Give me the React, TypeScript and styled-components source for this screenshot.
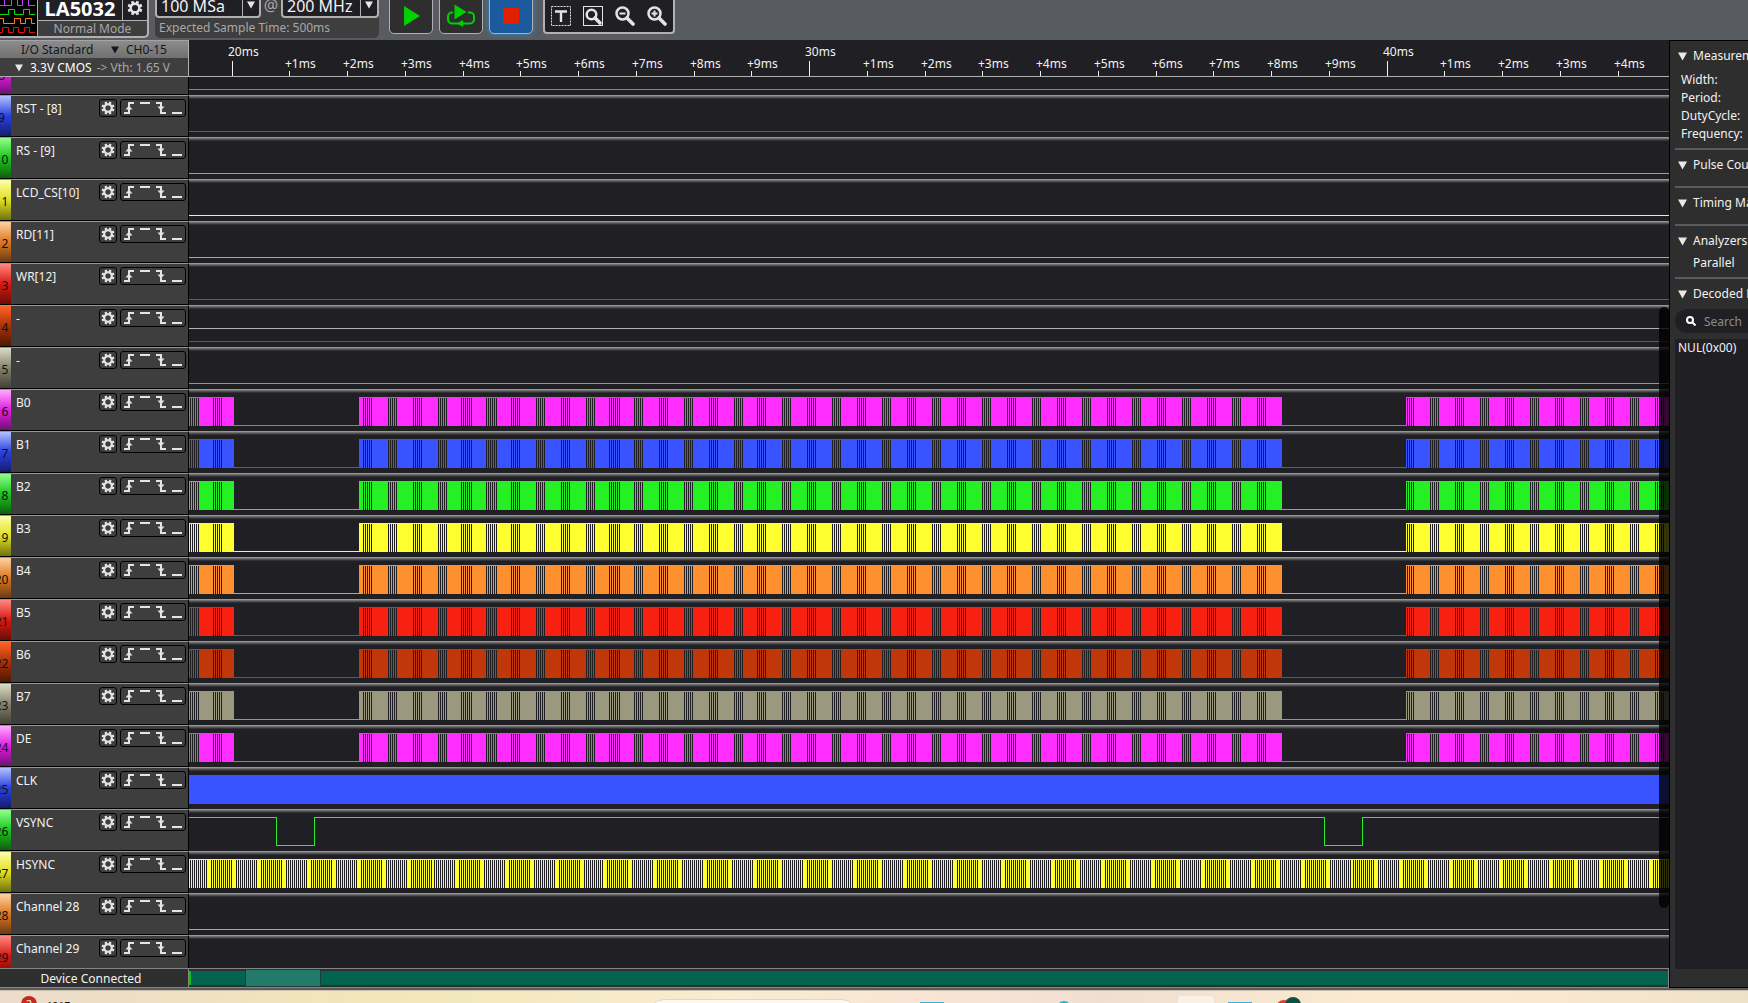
import React from "react";
import styled, { createGlobalStyle } from "styled-components";

const color = {
  chrome: "#585b5f",
  panel: "#3e3e3e",
  dark: "#2e2e2e",
  canvas: "#201f24",
  edge: "#b0b0b0",
  muted: "#a8a8a8",
  text: "#f2f2f2",
};

const GlobalStyle = createGlobalStyle`
  * { box-sizing: border-box; }
  body { margin: 0; background: ${color.chrome}; }
  body, button, input, select {
    font-family: "Noto Sans", "Open Sans", sans-serif;
    font-size: 12px;
    line-height: 18px;
    color: ${color.text};
  }
  button { padding: 0; cursor: pointer; }
`;

const Shell = styled.div`
  display: flex;
  flex-direction: column;
  height: 100vh;
  overflow: hidden;
  background: ${color.chrome};
`;

/* ---------- toolbar ---------- */

const Toolbar = styled.header`
  display: flex;
  align-items: flex-end;
  height: 40px;
  flex: none;
  overflow: hidden;
`;

const DeviceCard = styled.section`
  display: flex;
  height: 48px;
  width: 149px;
  margin-bottom: 2px;
  border: solid ${color.edge};
  border-width: 0 2px 2px 0;
  border-radius: 0 0 5px 0;
  background: ${color.panel};
  overflow: hidden;
`;

const LogoBox = styled.div`
  width: 38px;
  flex: none;
  background: #000;
  border-right: 1px solid ${color.edge};
`;

const DeviceInfo = styled.div`
  flex: 1;
  display: flex;
  flex-direction: column;
`;

const DeviceTop = styled.div`
  flex: 1;
  display: flex;
  align-items: flex-end;
  background: ${color.canvas};
  border-bottom: 1px solid ${color.edge};
`;

const DeviceName = styled.h1`
  flex: 1;
  margin: 0;
  text-align: center;
  font-size: 20px;
  line-height: 22px;
  font-weight: 700;
  color: #fff;
`;

const DeviceGear = styled.button`
  display: grid;
  place-items: center;
  width: 25px;
  height: 24px;
  border: 0;
  border-left: 1px solid ${color.edge};
  background: none;
`;

const DeviceMode = styled.div`
  height: 15px;
  line-height: 15px;
  text-align: center;
  color: ${color.muted};
`;

const SampleCard = styled.section`
  display: flex;
  flex-direction: column;
  justify-content: flex-end;
  width: 224px;
  height: 48px;
  margin: 0 10px 2px 6px;
  border-radius: 0 0 5px 5px;
  background: ${color.panel};
`;

const SampleRow = styled.div`
  display: flex;
  justify-content: space-between;
  align-items: center;
`;

const At = styled.span`
  font-size: 16px;
  color: ${color.muted};
`;

const Picker = styled.label<{ $width: number }>`
  display: flex;
  align-items: center;
  width: ${(p) => p.$width}px;
  height: 26px;
  border: 2px solid ${color.edge};
  border-radius: 4px;
  background: ${color.canvas};
`;

const PickerSelect = styled.select`
  flex: 1;
  min-width: 0;
  height: 22px;
  padding: 2px 0 0 4px;
  border: 0;
  appearance: none;
  background: none;
  font-size: 16px;
  line-height: 20px;
`;

const PickerArrow = styled.span`
  display: grid;
  place-items: center;
  width: 17px;
  height: 22px;
  border-left: 1px solid ${color.edge};
`;

const SampleNote = styled.div`
  height: 20px;
  padding: 0 4px;
  line-height: 20px;
  color: ${color.muted};
`;

const RunButtons = styled.div`
  display: flex;
  gap: 6px;
  margin: 0 10px 6px 0;
`;

const RunButton = styled.button<{ $active?: boolean }>`
  display: grid;
  place-items: center;
  width: 44px;
  height: 44px;
  padding-top: 8px;
  border: 1px solid ${color.edge};
  border-radius: 5px;
  background: ${(p) => (p.$active ? "#1c5a9f" : color.dark)};
  box-shadow: ${(p) => (p.$active ? "0 0 6px #2f86c8" : "none")};
`;

const ToolGroup = styled.div`
  display: flex;
  align-items: flex-end;
  gap: 12px;
  height: 44px;
  margin-bottom: 6px;
  padding: 0 6px 6px;
  border: 2px solid ${color.edge};
  border-radius: 4px;
  background: ${color.canvas};
`;

const ToolButton = styled.button`
  width: 20px;
  height: 20px;
  border: 0;
  background: none;
  svg { display: block; }
`;

/* ---------- workspace ---------- */

const Workspace = styled.div`
  display: flex;
  flex: 1;
  min-height: 0;
  margin-bottom: 2px;
`;

const Capture = styled.main`
  display: flex;
  flex-direction: column;
  flex: 1;
  min-width: 0;
  background: ${color.canvas};
`;

const CaptureHead = styled.div`
  display: flex;
  height: 37px;
  flex: none;
  border-bottom: 1px solid ${color.edge};
`;

const IoStandard = styled.div`
  width: 189px;
  flex: none;
  border-right: 1px solid ${color.edge};
  background: ${color.panel};
`;

const IoLine = styled.div<{ $bright?: boolean }>`
  display: flex;
  align-items: center;
  height: 18px;
  padding-top: 1px;
  line-height: 16px;
  gap: 7px;
  padding-left: ${(p) => (p.$bright ? 21 : 15)}px;
  color: ${(p) => (p.$bright ? "#161616" : "#fff")};
  background: ${(p) => (p.$bright ? "linear-gradient(#8c8c8c, #707070)" : "none")};
  border-top: ${(p) => (p.$bright ? "1px solid #a4a4a4" : "0")};
`;

const IoName = styled.span`
  width: 83px;
`;

const Threshold = styled.span`
  color: ${color.muted};
  margin-left: -2px;
  white-space: pre;
`;

const Ruler = styled.svg`
  flex: 1;
  min-width: 0;
  height: 36px;
  fill: ${color.text};
`;

const Channels = styled.div`
  position: relative;
  flex: 1;
  min-height: 0;
  overflow: hidden;
`;

const ChannelList = styled.ul`
  list-style: none;
  margin: -24px 0 0;
  padding: 0;
`;

const ChannelRow = styled.li`
  display: flex;
  height: 42px;
`;

const ChannelHead = styled.div`
  display: flex;
  align-items: flex-start;
  width: 189px;
  flex: none;
  border-top: 1px solid #969696;
  border-right: 1px solid #000;
  border-bottom: 1px solid #000;
  background: ${color.panel};
`;

const ChannelTab = styled.span<{ $light: string; $mid: string; $deep: string }>`
  width: 19px;
  height: 40px;
  margin-left: -8px;
  line-height: 44px;
  text-align: center;
  color: #101010;
  background: linear-gradient(${(p) => p.$light}, ${(p) => p.$mid} 50%, ${(p) => p.$deep});
`;

const ChannelName = styled.span`
  flex: 1;
  padding: 4px 0 0 5px;
`;

const IconButton = styled.button`
  display: grid;
  place-items: center;
  width: 18px;
  height: 18px;
  margin: 3px 3px 0 0;
  border: 1px solid #000;
  border-radius: 3px;
  background: ${color.panel};
`;

const TriggerButton = styled(IconButton)`
  width: 66px;
  margin-right: 2px;
`;

const Trace = styled.svg`
  flex: 1;
  min-width: 0;
  height: 42px;
`;

const ScrollThumb = styled.div`
  position: absolute;
  top: 230px;
  right: 0;
  bottom: 60px;
  width: 10px;
  border-radius: 5px;
  background: rgba(0, 0, 0, 0.8);
`;

const StatusBar = styled.footer`
  display: flex;
  height: 20px;
  flex: none;
  border: solid #858585;
  border-width: 1px 1px 1px 0;
  background: ${color.dark};
`;

const StatusText = styled.div`
  width: 189px;
  flex: none;
  padding-right: 6px;
  line-height: 20px;
  border-right: 1px solid #858585;
  text-align: center;
`;

const Overview = styled.div`
  display: flex;
  flex: 1;
  margin: 2px 0;
  background: #00644e;
  border-left: 2px solid #00c814;
`;

const OverviewWindow = styled.div`
  width: 76px;
  margin: -2px 0 -2px 54px;
  border: 1px solid #1c3c38;
  background: #247a68;
`;

/* ---------- side panel ---------- */

const Side = styled.aside`
  display: flex;
  flex-direction: column;
  width: 79px;
  flex: none;
  padding: 0 0 18px 5px;
  border: solid #000;
  border-width: 1px 0 1px 1px;
  background: ${color.dark};
  overflow: hidden;
  white-space: nowrap;
`;

const Section = styled.section`
  display: flex;
  flex-direction: column;
  padding: 6px 0 5px;
  border-bottom: 2px solid ${color.chrome};
  &:last-of-type { flex: 1; border: 0; padding-bottom: 0; }
`;

const SectionTitle = styled.button`
  display: flex;
  align-items: center;
  gap: 6px;
  padding-left: 3px;
  border: 0;
  background: none;
  white-space: nowrap;
  svg { flex: none; }
`;

const Measures = styled.div`
  padding: 6px 0 0 6px;
`;

const Analyzer = styled.div`
  padding: 4px 0 0 18px;
`;

const Collapsed = styled.div`
  height: 7px;
`;

const SearchBox = styled.label`
  display: flex;
  align-items: center;
  gap: 8px;
  width: 200px;
  height: 24px;
  margin: 6px 0;
  padding-left: 11px;
  border-radius: 12px;
  background: ${color.canvas};
`;

const SearchInput = styled.input`
  width: 150px;
  padding: 1px 0 0;
  border: 0;
  outline: 0;
  background: none;
  &::placeholder { color: #8c8c8c; opacity: 1; }
`;

const Results = styled.div`
  flex: 1;
  padding-left: 3px;
  background: ${color.canvas};
`;

/* ---------- desktop taskbar ---------- */

const Taskbar = styled.div`
  display: flex;
  align-items: flex-start;
  height: 13px;
  flex: none;
  overflow: hidden;
  border-top: 1px solid #cbbfa8;
  background: linear-gradient(90deg, #ecdccb, #f1e7b8 22%, #f9ecd0 42%, #f8e2d5 57%, #f0dfd0 63%, #fbead0 78%, #fbe8d2 88%, #ede2c8);
`;

const Weather = styled.div`
  display: flex;
  gap: 8px;
  width: 648px;
  padding: 5px 0 0 21px;
  color: #181818;
`;

const Alert = styled.span`
  width: 16px;
  height: 16px;
  border-radius: 8px;
  background: #c42b1c;
  color: #fff;
  font-size: 11px;
  line-height: 16px;
  text-align: center;
`;

const Temperature = styled.span`
  padding-top: 2px;
`;

const DesktopSearch = styled.div`
  width: 210px;
  height: 32px;
  margin-top: 8px;
  border: 1px solid #e4d6c0;
  border-radius: 16px;
  background: #fdf7f0;
`;

const TaskIcons = styled.svg`
  width: 400px;
  height: 13px;
  margin-left: 60px;
`;

/* ---------- icons ---------- */

const Gear = ({ size }: { size: number }) => (
  <svg width={size} height={size} viewBox="0 0 16 16" fill="#e4e4e4">
    {[0, 45, 90, 135, 180, 225, 270, 315].map((a) => (
      <rect key={a} x="6.6" y="0.6" width="2.8" height="4" transform={`rotate(${a + 22.5} 8 8)`} />
    ))}
    <circle cx="8" cy="8" r="4.3" fill="none" stroke="#e4e4e4" strokeWidth="2.4" />
  </svg>
);

const Down = ({ fill = "#e8e8e8", size = 8 }: { fill?: string; size?: number }) => (
  <svg width={size} height={size} viewBox="0 0 8 8" fill={fill}>
    <path d="M0 0.5H8L4 7.5Z" />
  </svg>
);

const Logo = () => (
  <svg width="37" height="46" viewBox="0 0 37 46" fill="none" strokeWidth="1">
    <path stroke="#c040ff" d="M0 15.5H4.500V10M4.500 15.500H11.500V10M17.500 10V15.500H22.500V10M28.500 10V15.500H35" />
    <path stroke="#00e010" d="M0 24.500H8.500V19.500H14.500V24.500H23.500V19.500H29.500V24.500H35" />
    <path stroke="#ff8010" d="M0 28.500H3.500V33.500H14.500V28.500H20.500V33.500H25.500V28.500H31.500V33.500H35" />
    <path stroke="#e01010" d="M0 42.500H2.500V37.500H8.500V42.500H13.500V37.500H18.500V42.500H24.500V37.500H29.500V42.500H35" />
  </svg>
);

const TriggerIcon = () => (
  <svg width="60" height="14" viewBox="0 0 60 14" fill="none" stroke="#e4e4e4" strokeWidth="2">
    <path d="M1 12H6V2H11M17 2H27M33 2H38V12H43M49 12H59" />
    <path d="M2.500 8.500L6 4.500L9.500 8.500ZM34.500 5.500L38 9.500L41.500 5.500Z" fill="#e4e4e4" stroke="none" />
  </svg>
);

const Lens = ({ sign, boxed }: { sign?: "plus" | "minus"; boxed?: boolean }) => (
  <svg width="20" height="20" viewBox="0 0 20 20" fill="none" stroke="#e4e4e4">
    {boxed && <rect x="0.5" y="0.5" width="19" height="19" />}
    <circle cx={boxed ? 8.500 : 7.500} cy={boxed ? 8.500 : 7.500} r={boxed ? 4.800 : 6} strokeWidth="2.500" />
    <path d={boxed ? "M12 12L17 17" : "M12 12L18 18"} strokeWidth="3.600" strokeLinecap="round" />
    {sign && <path d={sign === "plus" ? "M4.500 7.500H10.500M7.500 4.500V10.500" : "M4.500 7.500H10.500"} strokeWidth="2" />}
  </svg>
);

const TextMark = () => (
  <svg width="20" height="20" viewBox="0 0 20 20" fill="none" stroke="#e4e4e4">
    <rect x="0.5" y="0.5" width="19" height="19" strokeDasharray="2 1" />
    <path d="M4 5.500H16M10 5V16" strokeWidth="2.400" />
  </svg>
);

const Loop = () => (
  <svg width="30" height="24" viewBox="0 0 30 24" fill="none" stroke="#00d000" strokeWidth="2">
    <path d="M7 8.500H6A4 4 0 0 0 2 12.500V15A4 4 0 0 0 6 19.500H24A4 4 0 0 0 28 15V12.500A4 4 0 0 0 24 8.500H22" />
    <path d="M8.500 0.500L20.500 8L8.500 15.500ZM17 16L11 19.500L17 23Z" fill="#00d000" stroke="none" />
  </svg>
);

/* ---------- channel data ---------- */

type Wave = "low" | "none" | "data" | "clock" | "vsync" | "hsync";

const palette = [
  { line: "#ff2dff", light: "#ffa8ff", mid: "#e01ee0", deep: "#701070" },
  { line: "#3853ff", light: "#b4c0ff", mid: "#2840e0", deep: "#141c70" },
  { line: "#24f024", light: "#90ff90", mid: "#1cc41c", deep: "#0c600c" },
  { line: "#ffff30", light: "#ffffa8", mid: "#e0e020", deep: "#707010" },
  { line: "#ff9030", light: "#ffd0a0", mid: "#dc7820", deep: "#6c3a10" },
  { line: "#f82010", light: "#ff8880", mid: "#d81810", deep: "#6c0c08" },
  { line: "#c0380a", light: "#ff6428", mid: "#a83208", deep: "#4c1804" },
  { line: "#9a987e", light: "#dedcc4", mid: "#84826c", deep: "#424036" },
];

const channels: [number, string, Wave][] = [
  [8, "", "low"],
  [9, "RST - [8]", "low"],
  [10, "RS - [9]", "low"],
  [11, "LCD_CS[10]", "low"],
  [12, "RD[11]", "low"],
  [13, "WR[12]", "low"],
  [14, "-", "low"],
  [15, "-", "low"],
  [16, "B0", "data"],
  [17, "B1", "data"],
  [18, "B2", "data"],
  [19, "B3", "data"],
  [20, "B4", "data"],
  [21, "B5", "data"],
  [22, "B6", "data"],
  [23, "B7", "data"],
  [24, "DE", "data"],
  [25, "CLK", "clock"],
  [26, "VSYNC", "vsync"],
  [27, "HSYNC", "hsync"],
  [28, "Channel 28", "low"],
  [29, "Channel 29", "low"],
];

const FAR = 6000;
const box = (x: number, y: number, w: number, h: number) => `M${x} ${y}h${w}v${h}h${-w}z`;
const gaps = (start: number, count: number) =>
  Array.from({ length: count }, (_, i) => box(start + i * 2, 9, 1, 28)).join("");

/* Idle gaps between bursts on the parallel bus: [first gap, number of gaps]. */
const busGaps: [number, number][] = [[1, 5], [24, 5]];
{
  let x = 174;
  while (x < 1090) {
    const wide = x === 272 || x === 297 || x === 420;
    busGaps.push([x, wide ? 6 : 5]);
    x += x === 249 || x === 397 || x === 545 ? 23 : 25;
  }
  busGaps.push([1218, 4]);
  for (x = 1241; x < 1480; x += 25) busGaps.push([x, 5]);
}
const busFill = box(0, 8, 45, 29) + box(170, 8, 923, 29) + box(1217, 8, FAR, 29);
const busLow = box(0, 36, FAR, 1);
const busCut = busGaps.map(([x, n]) => gaps(x, n)).join("");

const hsyncCut = (() => {
  let d = gaps(1, 9);
  let x = 22;
  while (x < 1480) {
    const late = x === 395 || x === 793;
    d += gaps(x, late ? 10 : 11);
    x += x === 222 || late || x === 1141 ? 23 : 25;
  }
  return d;
})();

const vsyncPath = "M0 8.5H87.5V36.5H125.5V8.5H1135.5V36.5H1173.5V8.5H6000";

const WaveForm = ({ kind, stroke }: { kind: Wave; stroke: string }) => {
  switch (kind) {
    case "low":
      return <path d={busLow} fill={stroke} />;
    case "data":
      return (
        <>
          <path d={busLow + busFill} fill={stroke} />
          <path d={busCut} fill={color.canvas} />
        </>
      );
    case "clock":
      return <path d={box(0, 8, FAR, 29)} fill={stroke} />;
    case "vsync":
      return <path d={vsyncPath} fill="none" stroke={stroke} />;
    case "hsync":
      return (
        <>
          <path d={box(0, 8, FAR, 29)} fill={stroke} />
          <path d={hsyncCut} fill={color.canvas} />
        </>
      );
    default:
      return null;
  }
};

const MS = 57.75;
const ticks = Array.from({ length: 25 }, (_, n) => ({
  x: 43 + Math.floor(n * MS),
  major: n % 10 === 0,
  label: n % 10 === 0 ? `${20 + n}ms` : `+${n % 10}ms`,
}));

export default function App() {
  return (
    <Shell>
      <GlobalStyle />
      <Toolbar>
        <DeviceCard>
          <LogoBox><Logo /></LogoBox>
          <DeviceInfo>
            <DeviceTop>
              <DeviceName>LA5032</DeviceName>
              <DeviceGear aria-label="Device settings"><Gear size={16} /></DeviceGear>
            </DeviceTop>
            <DeviceMode>Normal Mode</DeviceMode>
          </DeviceInfo>
        </DeviceCard>
        <SampleCard>
          <SampleRow>
            <Picker $width={106}>
              <PickerSelect aria-label="Sample depth"><option>100 MSa</option></PickerSelect>
              <PickerArrow><Down /></PickerArrow>
            </Picker>
            <At>@</At>
            <Picker $width={98}>
              <PickerSelect aria-label="Sample rate"><option>200 MHz</option></PickerSelect>
              <PickerArrow><Down /></PickerArrow>
            </Picker>
          </SampleRow>
          <SampleNote>Expected Sample Time: 500ms</SampleNote>
        </SampleCard>
        <RunButtons>
          <RunButton aria-label="Run">
            <svg width="18" height="22" viewBox="0 0 18 22" fill="#00d000"><path d="M2 1L18 11L2 21Z" /></svg>
          </RunButton>
          <RunButton aria-label="Run repeatedly"><Loop /></RunButton>
          <RunButton $active aria-label="Stop">
            <svg width="16" height="16"><rect width="16" height="16" fill="#e02000" /></svg>
          </RunButton>
        </RunButtons>
        <ToolGroup>
          <ToolButton aria-label="Add text marker"><TextMark /></ToolButton>
          <ToolButton aria-label="Zoom to fit"><Lens boxed /></ToolButton>
          <ToolButton aria-label="Zoom out"><Lens sign="minus" /></ToolButton>
          <ToolButton aria-label="Zoom in"><Lens sign="plus" /></ToolButton>
        </ToolGroup>
      </Toolbar>

      <Workspace>
        <Capture>
          <CaptureHead>
            <IoStandard>
              <IoLine $bright>
                <IoName>I/O Standard</IoName>
                <Down fill="#161616" />
                <span>CH0-15</span>
              </IoLine>
              <IoLine>
                <Down />
                <span>3.3V CMOS</span>
                <Threshold>{"-> Vth: 1.65 V"}</Threshold>
              </IoLine>
            </IoStandard>
            <Ruler>
              {ticks.map((t) => (
                <g key={t.x}>
                  <rect x={t.x} y={t.major ? 21 : 31} width="1" height={t.major ? 15 : 5} />
                  <text x={t.x - 4} y={t.major ? 16 : 28}>{t.label}</text>
                </g>
              ))}
            </Ruler>
          </CaptureHead>

          <Channels>
            <ChannelList>
              {channels.map(([id, name, kind]) => {
                const c = palette[id % 8];
                return (
                  <ChannelRow key={id}>
                    <ChannelHead>
                      <ChannelTab $light={c.light} $mid={c.mid} $deep={c.deep}>{id}</ChannelTab>
                      <ChannelName>{name}</ChannelName>
                      <IconButton aria-label={`Channel ${id} settings`}><Gear size={14} /></IconButton>
                      <TriggerButton aria-label={`Channel ${id} trigger`}><TriggerIcon /></TriggerButton>
                    </ChannelHead>
                    <Trace shapeRendering="crispEdges">
                      <path d={box(0, 0, FAR, 1)} fill="#969696" />
                      <path d={box(0, 1, FAR, 1)} fill="#707070" />
                      <path d={box(0, 2, FAR, 1)} fill="#4c4c4e" />
                      <path d={box(0, 3, FAR, 1)} fill="#323236" />
                      {id === 14 && <path d={box(0, 23, FAR, 1)} fill="#b4b4b8" />}
                      <WaveForm kind={kind} stroke={c.line} />
                    </Trace>
                  </ChannelRow>
                );
              })}
            </ChannelList>
            <ScrollThumb />
          </Channels>

          <StatusBar>
            <StatusText>Device Connected</StatusText>
            <Overview><OverviewWindow /></Overview>
          </StatusBar>
        </Capture>

        <Side>
          <Section>
            <SectionTitle><Down size={9} />Measurements</SectionTitle>
            <Measures>
              <div>Width:</div>
              <div>Period:</div>
              <div>DutyCycle:</div>
              <div>Frequency:</div>
            </Measures>
          </Section>
          <Section>
            <SectionTitle><Down size={9} />Pulse Counters</SectionTitle>
            <Collapsed />
          </Section>
          <Section>
            <SectionTitle><Down size={9} />Timing Markers</SectionTitle>
            <Collapsed />
          </Section>
          <Section>
            <SectionTitle><Down size={9} />Analyzers</SectionTitle>
            <Analyzer>Parallel</Analyzer>
          </Section>
          <Section>
            <SectionTitle><Down size={9} />Decoded Results</SectionTitle>
            <SearchBox>
              <svg width="10" height="10" viewBox="0 0 10 10" fill="none" stroke="#fff" strokeWidth="2">
                <circle cx="4" cy="4" r="3" />
                <path d="M6 6L9.500 9.500" />
              </svg>
              <SearchInput placeholder="Search" aria-label="Search decoded results" />
            </SearchBox>
            <Results>NUL(0x00)</Results>
          </Section>
        </Side>
      </Workspace>

      <Taskbar>
        <Weather>
          <Alert>2</Alert>
          <Temperature>40°F</Temperature>
        </Weather>
        <DesktopSearch />
        <TaskIcons>
          <rect x="2" y="11" width="24" height="2" fill="#38b4e0" />
          <circle cx="146" cy="17" r="7" fill="#20b8d8" />
          <rect x="259" y="4" width="38" height="20" rx="4" fill="#fbf0e6" stroke="#ecdccc" />
          <rect x="310" y="11" width="24" height="2" fill="#38b4e0" />
          <circle cx="366" cy="17" r="8" fill="#e04030" />
          <circle cx="375" cy="14" r="8" fill="#0c5044" />
        </TaskIcons>
      </Taskbar>
    </Shell>
  );
}
